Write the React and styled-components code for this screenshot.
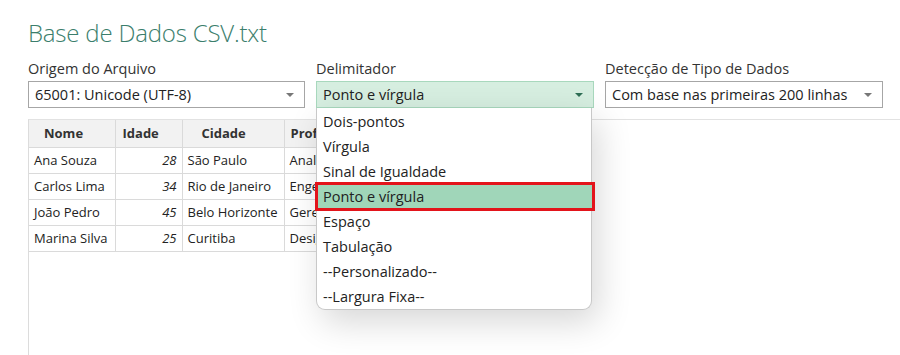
import React from "react";
import styled, { createGlobalStyle } from "styled-components";

const Global = createGlobalStyle`
  html, body { margin: 0; padding: 0; background: #fff; }
  body { font-family: "Open Sans", "Noto Sans", sans-serif; color: #333; }
  * { box-sizing: border-box; }
`;

const Page = styled.div`
  width: 900px;
  height: 355px;
  overflow: hidden;
  padding-left: 28px;
`;

const Title = styled.h1`
  margin: 0;
  padding-top: 17px;
  height: 56px;
  font-size: 24px;
  font-weight: 300;
  color: #3b7e6c;
  letter-spacing: -0.2px;
  line-height: 32px;
`;

const SelectRow = styled.div`
  display: grid;
  grid-template-columns: 277px 278px 278px;
  column-gap: 11px;
  height: 63px;
`;

const Field = styled.div`
  position: relative;
  display: flex;
  flex-direction: column;
`;

const Label = styled.label`
  font-size: 14.5px;
  line-height: 25px;
  height: 25px;
  color: #333;
`;

const Select = styled.div`
  height: 27px;
  display: flex;
  align-items: center;
  justify-content: space-between;
  padding: 0 10px 0 6px;
  font-size: 14.5px;
  color: #222;
  border: 1px solid ${(p) => (p.$active ? "#a8d8bd" : "#a6a6a6")};
  background: ${(p) => (p.$active ? "#d6eee0" : "#fff")};
`;

const Caret = styled.span`
  width: 0;
  height: 0;
  border-left: 4px solid transparent;
  border-right: 4px solid transparent;
  border-top: 4px solid ${(p) => (p.$active ? "#2f6e55" : "#777")};
`;

const Menu = styled.ul`
  position: absolute;
  top: 52px;
  left: 0;
  width: 276px;
  margin: 0;
  padding: 1px 0 0 0;
  list-style: none;
  background: #fff;
  border: 1px solid #c8c8c8;
  border-top: none;
  border-radius: 0 0 9px 9px;
  box-shadow: 6px 12px 34px rgba(0, 0, 0, 0.16);
  z-index: 5;
`;

const Item = styled.li`
  height: 25px;
  line-height: 25px;
  padding-left: 6px;
  font-size: 14.5px;
  color: #222;
  white-space: nowrap;
  ${(p) =>
    p.$selected &&
    `
    background: #a0d6b9;
    outline: 3px solid #e3141b;
    outline-offset: -1px;
    margin-right: -2px;
    position: relative;
  `}
`;

const Preview = styled.div`
  border-top: 1px solid #e2e2e2;
  border-left: 1px solid #dcdcdc;
  height: 240px;
`;

const Table = styled.table`
  border-collapse: collapse;
  table-layout: fixed;
  width: 355px;
  font-size: 13px;
  color: #222;
`;

const Th = styled.th`
  height: 27px;
  background: #f2f2f2;
  border: 1px solid #dadada;
  border-top: none;
  border-left: none;
  font-weight: 700;
  text-align: left;
  padding: 0 0 0 ${(p) => p.$pl}px;
  color: #333;
  white-space: nowrap;
  overflow: hidden;
`;

const Td = styled.td`
  height: 26px;
  border: 1px solid #dadada;
  border-left: none;
  padding: 0 5px;
  text-align: ${(p) => (p.$num ? "right" : "left")};
  font-style: ${(p) => (p.$num ? "italic" : "normal")};
  white-space: nowrap;
  overflow: hidden;
`;

const rows = [
  ["Ana Souza", "28", "São Paulo", "Analista"],
  ["Carlos Lima", "34", "Rio de Janeiro", "Engenheiro"],
  ["João Pedro", "45", "Belo Horizonte", "Gerente"],
  ["Marina Silva", "25", "Curitiba", "Designer"],
];

const options = [
  "Dois-pontos",
  "Vírgula",
  "Sinal de Igualdade",
  "Ponto e vírgula",
  "Espaço",
  "Tabulação",
  "--Personalizado--",
  "--Largura Fixa--",
];

const widths = [86, 67, 102, 100];

export default function App() {
  return (
    <Page>
      <Global />
      <Title>Base de Dados CSV.txt</Title>
      <SelectRow>
        <Field>
          <Label>Origem do Arquivo</Label>
          <Select>
            65001: Unicode (UTF-8)
            <Caret />
          </Select>
        </Field>
        <Field>
          <Label>Delimitador</Label>
          <Select $active>
            Ponto e vírgula
            <Caret $active />
          </Select>
          <Menu>
            {options.map((o) => (
              <Item key={o} $selected={o === "Ponto e vírgula"}>
                {o}
              </Item>
            ))}
          </Menu>
        </Field>
        <Field>
          <Label>Detecção de Tipo de Dados</Label>
          <Select>
            Com base nas primeiras 200 linhas
            <Caret />
          </Select>
        </Field>
      </SelectRow>
      <Preview>
        <Table>
          <colgroup>
            {widths.map((w, i) => (
              <col key={i} style={{ width: w }} />
            ))}
          </colgroup>
          <thead>
            <tr>
              <Th $pl={15}>Nome</Th>
              <Th $pl={7}>Idade</Th>
              <Th $pl={19}>Cidade</Th>
              <Th $pl={6}>Profissão</Th>
            </tr>
          </thead>
          <tbody>
            {rows.map((r) => (
              <tr key={r[0]}>
                <Td>{r[0]}</Td>
                <Td $num>{r[1]}</Td>
                <Td>{r[2]}</Td>
                <Td>{r[3]}</Td>
              </tr>
            ))}
          </tbody>
        </Table>
      </Preview>
    </Page>
  );
}
